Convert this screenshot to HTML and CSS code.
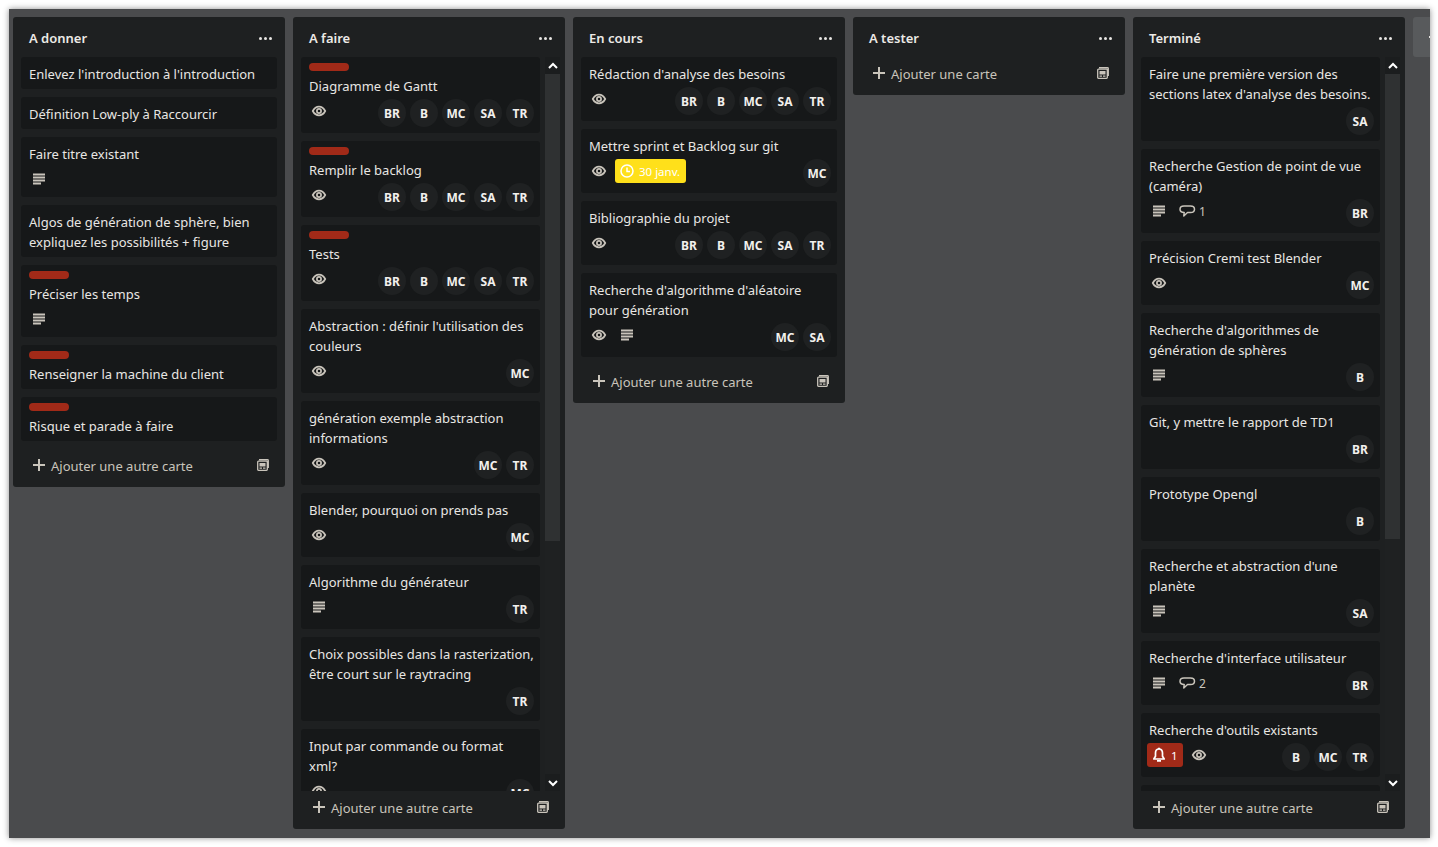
FILE: index.html
```html
<!DOCTYPE html>
<html lang="fr">
<head>
    <meta charset="UTF-8">
    <title>Tableau</title>
    <link rel="stylesheet" href="styles.css">
</head>
<body>
    <svg class="defs" width="0" height="0">
        <symbol id="i-eye" viewBox="0 0 20 20"><path d="M3.800 10c1.500-2.900 3.600-4.300 6.200-4.300s4.700 1.400 6.200 4.300c-1.500 2.900-3.600 4.300-6.200 4.300S5.300 12.900 3.800 10z" fill="none" stroke="currentColor" stroke-width="1.800"/><circle cx="10" cy="10" r="2.100" fill="none" stroke="currentColor" stroke-width="1.700"/></symbol>
        <symbol id="i-desc" viewBox="0 0 20 20"><path d="M4 4.500h12v2H4zM4 7.500h12v2H4zM4 10.500h12v2H4zM4 13.500h8v2H4z" fill="currentColor"/></symbol>
        <symbol id="i-comment" viewBox="0 0 20 20"><path d="M7 5h6.500c2.300 0 4 1.300 4 3.200s-1.700 3.300-4 3.300H10.500L6.800 15l.4-3.500C4.800 11.400 3 10.100 3 8.200S4.700 5 7 5z" fill="none" stroke="currentColor" stroke-width="1.500" stroke-linejoin="round"/></symbol>
        <symbol id="i-clock" viewBox="0 0 20 20"><circle cx="10" cy="10" r="6" fill="none" stroke="currentColor" stroke-width="1.500"/><path d="M10 6.500V10.500H13" fill="none" stroke="currentColor" stroke-width="1.500"/></symbol>
        <symbol id="i-bell" viewBox="0 0 20 20"><path d="M10 4c-2.300 0-3.500 1.700-3.500 4v3.200L4.800 14h10.400l-1.700-2.800V8c0-2.300-1.200-4-3.500-4z" fill="none" stroke="currentColor" stroke-width="1.700" stroke-linejoin="round"/><path d="M8 15h4v1.700H8zM9 2.800h2v1.500H9z" fill="currentColor"/></symbol>
        <symbol id="i-plus" viewBox="0 0 12 12"><path d="M5 0h2v5h5v2H7v5H5V7H0V5h5z" fill="currentColor"/></symbol>
        <symbol id="i-template" viewBox="0 0 12 12"><path d="M2 .7h8.500c.5 0 .8.300.8.800V9M.7 3c0-.5.300-.8.800-.8h8c.5 0 .8.300.8.800v7.500c0 .5-.3.800-.8.800h-8c-.5 0-.8-.3-.8-.8z" fill="none" stroke="currentColor" stroke-width="1.300"/><path d="M2.500 4h6v3.500h-6zM2.500 8.500h2.500v1.300H2.500zM6 8.500h2.500v1.300H6z" fill="currentColor"/></symbol>
        <symbol id="i-up" viewBox="0 0 10 10"><path d="M1 7l4-4 4 4" fill="none" stroke="currentColor" stroke-width="2"/></symbol>
        <symbol id="i-down" viewBox="0 0 10 10"><path d="M1 3l4 4 4-4" fill="none" stroke="currentColor" stroke-width="2"/></symbol>
    </svg>

    <div class="board">

        <!-- A donner -->
        <section class="list">
            <header class="list-head"><h2>A donner</h2><span class="dots"><i></i><i></i><i></i></span></header>
            <div class="list-body">
                <div class="cards">
                    <article class="card"><p>Enlevez l'introduction à l'introduction</p></article>
                    <article class="card"><p>Définition Low-ply à Raccourcir</p></article>
                    <article class="card"><p>Faire titre existant</p>
                        <div class="row"><div class="badges"><svg class="ico"><use href="#i-desc"/></svg></div></div>
                    </article>
                    <article class="card"><p>Algos de génération de sphère, bien expliquez les possibilités + figure</p></article>
                    <article class="card"><span class="label"></span><p>Préciser les temps</p>
                        <div class="row"><div class="badges"><svg class="ico"><use href="#i-desc"/></svg></div></div>
                    </article>
                    <article class="card"><span class="label"></span><p>Renseigner la machine du client</p></article>
                    <article class="card"><span class="label"></span><p>Risque et parade à faire</p></article>
                </div>
            </div>
            <footer class="list-foot"><svg class="plus"><use href="#i-plus"/></svg><span>Ajouter une autre carte</span><svg class="tpl"><use href="#i-template"/></svg></footer>
        </section>

        <!-- A faire -->
        <section class="list">
            <header class="list-head"><h2>A faire</h2><span class="dots"><i></i><i></i><i></i></span></header>
            <div class="list-body scroll">
                <div class="cards">
                    <article class="card"><span class="label"></span><p>Diagramme de Gantt</p>
                        <div class="row"><div class="badges"><svg class="ico"><use href="#i-eye"/></svg></div>
                            <div class="members"><b>BR</b><b>B</b><b>MC</b><b>SA</b><b>TR</b></div></div>
                    </article>
                    <article class="card"><span class="label"></span><p>Remplir le backlog</p>
                        <div class="row"><div class="badges"><svg class="ico"><use href="#i-eye"/></svg></div>
                            <div class="members"><b>BR</b><b>B</b><b>MC</b><b>SA</b><b>TR</b></div></div>
                    </article>
                    <article class="card"><span class="label"></span><p>Tests</p>
                        <div class="row"><div class="badges"><svg class="ico"><use href="#i-eye"/></svg></div>
                            <div class="members"><b>BR</b><b>B</b><b>MC</b><b>SA</b><b>TR</b></div></div>
                    </article>
                    <article class="card"><p>Abstraction : définir l'utilisation des couleurs</p>
                        <div class="row"><div class="badges"><svg class="ico"><use href="#i-eye"/></svg></div>
                            <div class="members"><b>MC</b></div></div>
                    </article>
                    <article class="card"><p>génération exemple abstraction informations</p>
                        <div class="row"><div class="badges"><svg class="ico"><use href="#i-eye"/></svg></div>
                            <div class="members"><b>MC</b><b>TR</b></div></div>
                    </article>
                    <article class="card"><p>Blender, pourquoi on prends pas</p>
                        <div class="row"><div class="badges"><svg class="ico"><use href="#i-eye"/></svg></div>
                            <div class="members"><b>MC</b></div></div>
                    </article>
                    <article class="card"><p>Algorithme du générateur</p>
                        <div class="row"><div class="badges"><svg class="ico"><use href="#i-desc"/></svg></div>
                            <div class="members"><b>TR</b></div></div>
                    </article>
                    <article class="card"><p class="nowrap">Choix possibles dans la rasterization,<br>être court sur le raytracing</p>
                        <div class="row"><div class="members"><b>TR</b></div></div>
                    </article>
                    <article class="card"><p>Input par commande ou format xml?</p>
                        <div class="row"><div class="badges"><svg class="ico"><use href="#i-eye"/></svg></div>
                            <div class="members"><b>MC</b></div></div>
                    </article>
                </div>
                <div class="scrollbar">
                    <span class="sb-btn"><svg><use href="#i-up"/></svg></span>
                    <span class="sb-thumb thumb-a"></span>
                    <span class="sb-track"></span>
                    <span class="sb-btn"><svg><use href="#i-down"/></svg></span>
                </div>
            </div>
            <footer class="list-foot"><svg class="plus"><use href="#i-plus"/></svg><span>Ajouter une autre carte</span><svg class="tpl"><use href="#i-template"/></svg></footer>
        </section>

        <!-- En cours -->
        <section class="list">
            <header class="list-head"><h2>En cours</h2><span class="dots"><i></i><i></i><i></i></span></header>
            <div class="list-body">
                <div class="cards">
                    <article class="card"><p>Rédaction d'analyse des besoins</p>
                        <div class="row"><div class="badges"><svg class="ico"><use href="#i-eye"/></svg></div>
                            <div class="members"><b>BR</b><b>B</b><b>MC</b><b>SA</b><b>TR</b></div></div>
                    </article>
                    <article class="card"><p>Mettre sprint et Backlog sur git</p>
                        <div class="row"><div class="badges"><svg class="ico"><use href="#i-eye"/></svg>
                            <span class="pill pill-date"><svg><use href="#i-clock"/></svg>30 janv.</span></div>
                            <div class="members"><b>MC</b></div></div>
                    </article>
                    <article class="card"><p>Bibliographie du projet</p>
                        <div class="row"><div class="badges"><svg class="ico"><use href="#i-eye"/></svg></div>
                            <div class="members"><b>BR</b><b>B</b><b>MC</b><b>SA</b><b>TR</b></div></div>
                    </article>
                    <article class="card"><p>Recherche d'algorithme d'aléatoire pour génération</p>
                        <div class="row"><div class="badges"><svg class="ico"><use href="#i-eye"/></svg><svg class="ico"><use href="#i-desc"/></svg></div>
                            <div class="members"><b>MC</b><b>SA</b></div></div>
                    </article>
                </div>
            </div>
            <footer class="list-foot"><svg class="plus"><use href="#i-plus"/></svg><span>Ajouter une autre carte</span><svg class="tpl"><use href="#i-template"/></svg></footer>
        </section>

        <!-- A tester -->
        <section class="list">
            <header class="list-head"><h2>A tester</h2><span class="dots"><i></i><i></i><i></i></span></header>
            <footer class="list-foot"><svg class="plus"><use href="#i-plus"/></svg><span>Ajouter une carte</span><svg class="tpl"><use href="#i-template"/></svg></footer>
        </section>

        <!-- Terminé -->
        <section class="list">
            <header class="list-head"><h2>Terminé</h2><span class="dots"><i></i><i></i><i></i></span></header>
            <div class="list-body scroll">
                <div class="cards">
                    <article class="card"><p>Faire une première version des sections latex d'analyse des besoins.</p>
                        <div class="row"><div class="members"><b>SA</b></div></div>
                    </article>
                    <article class="card"><p>Recherche Gestion de point de vue (caméra)</p>
                        <div class="row"><div class="badges"><svg class="ico"><use href="#i-desc"/></svg><span class="count"><svg class="ico"><use href="#i-comment"/></svg>1</span></div>
                            <div class="members"><b>BR</b></div></div>
                    </article>
                    <article class="card"><p>Précision Cremi test Blender</p>
                        <div class="row"><div class="badges"><svg class="ico"><use href="#i-eye"/></svg></div>
                            <div class="members"><b>MC</b></div></div>
                    </article>
                    <article class="card"><p>Recherche d'algorithmes de génération de sphères</p>
                        <div class="row"><div class="badges"><svg class="ico"><use href="#i-desc"/></svg></div>
                            <div class="members"><b>B</b></div></div>
                    </article>
                    <article class="card"><p>Git, y mettre le rapport de TD1</p>
                        <div class="row"><div class="members"><b>BR</b></div></div>
                    </article>
                    <article class="card"><p>Prototype Opengl</p>
                        <div class="row"><div class="members"><b>B</b></div></div>
                    </article>
                    <article class="card"><p>Recherche et abstraction d'une planète</p>
                        <div class="row"><div class="badges"><svg class="ico"><use href="#i-desc"/></svg></div>
                            <div class="members"><b>SA</b></div></div>
                    </article>
                    <article class="card"><p>Recherche d'interface utilisateur</p>
                        <div class="row"><div class="badges"><svg class="ico"><use href="#i-desc"/></svg><span class="count"><svg class="ico"><use href="#i-comment"/></svg>2</span></div>
                            <div class="members"><b>BR</b></div></div>
                    </article>
                    <article class="card"><p>Recherche d'outils existants</p>
                        <div class="row"><div class="badges"><span class="pill pill-bell"><svg><use href="#i-bell"/></svg>1</span><svg class="ico"><use href="#i-eye"/></svg></div>
                            <div class="members"><b>B</b><b>MC</b><b>TR</b></div></div>
                    </article>
                    <article class="card card-empty"></article>
                </div>
                <div class="scrollbar">
                    <span class="sb-btn"><svg><use href="#i-up"/></svg></span>
                    <span class="sb-thumb thumb-b"></span>
                    <span class="sb-track"></span>
                    <span class="sb-btn"><svg><use href="#i-down"/></svg></span>
                </div>
            </div>
            <footer class="list-foot"><svg class="plus"><use href="#i-plus"/></svg><span>Ajouter une autre carte</span><svg class="tpl"><use href="#i-template"/></svg></footer>
        </section>

        <div class="add-list"><svg class="plus"><use href="#i-plus"/></svg></div>
    </div>
</body>
</html>
```

FILE: styles.css
```css
* {
    box-sizing: border-box;
}
html, body {
    height: 100%;
}
body {
    margin: 0;
    padding: 9px 8px 9px 9px;
    background-color: #fff;
    font-family: "Noto Sans", sans-serif;
    font-size: 13px;
    color: #e8e6e3;
}
.defs {
    position: absolute;
}
.board {
    display: flex;
    align-items: flex-start;
    gap: 8px;
    height: 100%;
    padding: 8px 0 9px 4px;
    overflow: hidden;
    background-color: #4a4b4d;
    box-shadow: 0 0 6px rgba(0, 0, 0, 0.45);
}
.list {
    display: flex;
    flex-direction: column;
    flex: 0 0 272px;
    min-width: 0;
    max-height: 100%;
    border-radius: 3px;
    background-color: #1e2021;
}
.list-head {
    display: flex;
    align-items: center;
    justify-content: space-between;
    flex: none;
    height: 40px;
    padding: 2px 14px 0 16px;
}
.list-head h2 {
    margin: 0;
    font-size: 13px;
    font-weight: 600;
    color: #eceae6;
}
.dots {
    display: flex;
    gap: 2px;
    margin-right: -1px;
}
.dots i {
    width: 3px;
    height: 3px;
    border-radius: 50%;
    background-color: #e8e6e3;
}
.list-body {
    display: flex;
    flex: 1;
    min-height: 0;
    padding: 0 8px;
}
.list-body.scroll {
    padding-right: 5px;
}
.cards {
    flex: 1;
    min-width: 0;
    overflow: hidden;
}
.card {
    margin-bottom: 8px;
    padding: 6px 8px;
    border-radius: 3px;
    background-color: #161819;
}
.card-empty {
    height: 32px;
}
.card p {
    margin: 0 0 -1px;
    padding-top: 1px;
    line-height: 20px;
}
.card p.nowrap {
    white-space: nowrap;
}
.label {
    display: block;
    width: 40px;
    height: 8px;
    margin-bottom: 4px;
    border-radius: 4px;
    background-color: #a12a18;
}
.row {
    display: flex;
    align-items: flex-start;
    margin-top: 4px;
}
.badges {
    display: flex;
    align-items: center;
    gap: 8px;
    height: 24px;
    color: #c9c4bb;
}
.ico {
    flex: none;
    width: 20px;
    height: 20px;
}
.count {
    display: flex;
    align-items: center;
    font-size: 12px;
    gap: 2px;
}
.pill {
    display: flex;
    align-items: center;
    height: 24px;
    padding: 0 6px 0 2px;
    border-radius: 3px;
    font-size: 11.5px;
    color: #fff;
}
.pill svg {
    width: 20px;
    height: 20px;
    margin-right: 2px;
}
.pill-date {
    margin-left: -2px;
    background-color: #ffe01a;
}
.pill-bell {
    margin: 0 -2px;
    padding-right: 5px;
    background-color: #a12a18;
}
.members {
    display: flex;
    gap: 4px;
    margin-left: auto;
    margin-right: -2px;
}
.members b {
    display: flex;
    align-items: center;
    justify-content: center;
    width: 28px;
    height: 28px;
    border-radius: 50%;
    background-color: #1f2122;
    font-size: 12px;
    font-weight: 700;
    color: #f2f0ed;
}
.scrollbar {
    display: flex;
    flex-direction: column;
    flex: none;
    width: 15px;
    margin-left: 5px;
}
.sb-btn {
    display: flex;
    align-items: center;
    justify-content: center;
    flex: none;
    height: 17px;
    background-color: #1b1d1e;
    color: #fff;
}
.sb-btn svg {
    width: 10px;
    height: 10px;
}
.sb-thumb {
    flex: none;
    background-color: #2f3132;
}
.thumb-a {
    height: 467px;
}
.thumb-b {
    height: 465px;
}
.sb-track {
    flex: 1;
    background-color: #1f2122;
}
.list-foot {
    display: flex;
    align-items: center;
    flex: none;
    height: 28px;
    margin: 2px 0 8px;
    padding: 0 16px 0 20px;
    color: #c9c4bb;
}
.list-foot span {
    padding-top: 2px;
}
.plus {
    flex: none;
    width: 12px;
    height: 12px;
    margin-right: 6px;
}
.tpl {
    flex: none;
    width: 12px;
    height: 12px;
    margin-left: auto;
}
.add-list {
    display: flex;
    align-items: center;
    flex: 0 0 272px;
    height: 40px;
    padding-left: 16px;
    border-radius: 3px;
    background-color: #585a5c;
    color: #e8e6e3;
}
```
